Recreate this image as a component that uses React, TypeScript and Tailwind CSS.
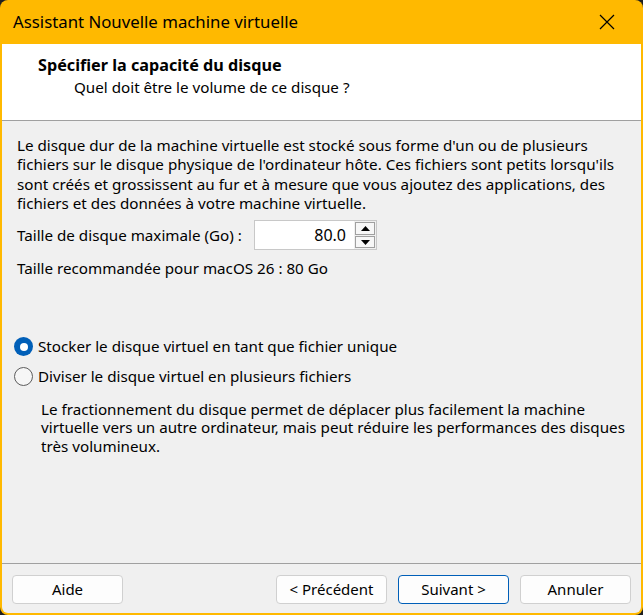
import React from "react";

const font = { fontFamily: '"Noto Sans", "Segoe UI", sans-serif' };

function Button({ label, primary }: { label: string; primary?: boolean }) {
  return (
    <button
      className={
        primary
          ? "w-[111px] h-[29px] rounded-[4px] border border-[#005fb8] bg-[#fdfdfd] text-[15px] text-black"
          : "w-[111px] h-[29px] rounded-[4px] border border-[#d0d0d0] bg-[#fdfdfd] text-[15px] text-black"
      }
    >
      {label}
    </button>
  );
}

function Radio({ checked, label }: { checked?: boolean; label: string }) {
  return (
    <label className="flex items-center h-[30px] -ml-[3px]">
      {checked ? (
        <span className="w-[19px] h-[19px] rounded-full bg-[#005fb8] flex items-center justify-center">
          <span className="w-[8px] h-[8px] rounded-full bg-white" />
        </span>
      ) : (
        <span className="w-[19px] h-[19px] rounded-full border border-[#5c5c5c] bg-[#f6f6f6]" />
      )}
      <span className="ml-[5px]">{label}</span>
    </label>
  );
}

export default function App() {
  return (
    <div className="w-[643px] h-[615px] bg-[#202020]" style={font}>
      <div className="w-full h-full rounded-[8px] overflow-hidden bg-[#ffb900] flex flex-col">
        {/* title bar */}
        <div className="h-[44px] flex items-center justify-between pl-[13px] pr-[28px] shrink-0">
          <span className="text-[16.8px] text-black">Assistant Nouvelle machine virtuelle</span>
          <svg width="16" height="16" viewBox="0 0 16 16" className="text-black">
            <path d="M1 1 L15 15 M15 1 L1 15" stroke="currentColor" strokeWidth="1.2" />
          </svg>
        </div>

        <div className="flex-1 mx-[2px] mb-[2px] rounded-b-[6px] bg-[#f0f0f0] flex flex-col text-[15.2px] text-black">
          {/* header */}
          <div className="h-[77px] bg-white border-b border-[#a0a0a0] pt-[10px] leading-[22px]">
            <div className="pl-[36px] font-bold text-[16.2px]">Spécifier la capacité du disque</div>
            <div className="pl-[72px]">Quel doit être le volume de ce disque ?</div>
          </div>

          {/* body */}
          <div className="flex-1 pl-[15px] pr-[12px] pt-[15px] leading-[19.33px]">
            <p>
              Le disque dur de la machine virtuelle est stocké sous forme d'un ou de plusieurs
              fichiers sur le disque physique de l'ordinateur hôte. Ces fichiers sont petits lorsqu'ils
              sont créés et grossissent au fur et à mesure que vous ajoutez des applications, des
              fichiers et des données à votre machine virtuelle.
            </p>

            <div className="flex items-center mt-[7px] h-[30px]">
              <span className="w-[237px]">Taille de disque maximale (Go) :</span>
              <div className="flex h-[30px] border border-[#c8c8c8]">
                <div className="w-[99px] bg-white flex items-center justify-end pr-[8px] text-[16px]">
                  80.0
                </div>
                <div className="w-[22px] flex flex-col bg-[#f0f0f0]">
                  <div className="flex-1 flex items-center justify-center border border-[#a0a0a0] m-[1px] mb-0 bg-[#f7f7f7]">
                    <svg width="9" height="5" viewBox="0 0 9 5">
                      <path d="M4.5 0 L9 5 L0 5 Z" fill="#000" />
                    </svg>
                  </div>
                  <div className="flex-1 flex items-center justify-center border border-[#a0a0a0] m-[1px] bg-[#f7f7f7]">
                    <svg width="9" height="5" viewBox="0 0 9 5">
                      <path d="M0 0 L9 0 L4.5 5 Z" fill="#000" />
                    </svg>
                  </div>
                </div>
              </div>
            </div>

            <div className="mt-[9px]">Taille recommandée pour macOS 26 : 80 Go</div>

            <div className="mt-[53px] flex flex-col">
              <Radio checked label="Stocker le disque virtuel en tant que fichier unique" />
              <Radio label="Diviser le disque virtuel en plusieurs fichiers" />
            </div>

            <p className="pl-[24px] pr-[4px] mt-[8px] leading-[18.6px]">
              Le fractionnement du disque permet de déplacer plus facilement la machine
              virtuelle vers un autre ordinateur, mais peut réduire les performances des disques
              très volumineux.
            </p>
          </div>

          {/* footer */}
          <div className="border-t border-[#a0a0a0] h-[50px] flex items-center justify-between px-[10px] pt-[1px]">
            <Button label="Aide" />
            <div className="flex gap-[11px]">
              <Button label="< Précédent" />
              <Button label="Suivant >" primary />
              <Button label="Annuler" />
            </div>
          </div>
        </div>
      </div>
    </div>
  );
}
